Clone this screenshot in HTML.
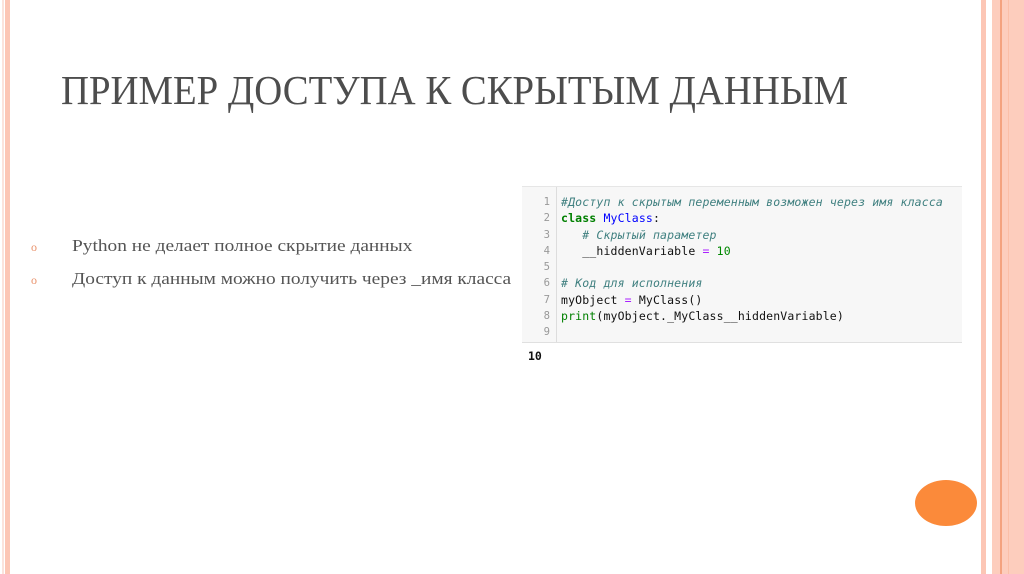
<!DOCTYPE html>
<html><head><meta charset="utf-8"><style>
body{margin:0;width:1024px;height:574px;background:#fff;position:relative;overflow:hidden;font-family:"Liberation Serif",serif}
.s{position:absolute;top:0;height:574px}
.code{position:absolute;left:522px;top:186px;width:440px;height:155px;background:#f7f7f7;border-top:1px solid #e6e6e6;border-bottom:1px solid #e0e0e0}
.gut{position:absolute;left:0;top:0;width:34px;height:155px;border-right:1px solid #ddd}
pre{margin:0;font-family:"DejaVu Sans Mono","Liberation Mono",monospace;font-size:11.5px;line-height:16.3px}
.ln{position:absolute;left:0;top:7px;width:28px;text-align:right;color:#999;font-size:10.6px}
.src{position:absolute;left:39px;top:7px;color:#111;letter-spacing:0.15px}
.c{color:#408080;font-style:italic}.k{color:#008000;font-weight:bold}.n{color:#0000ff}.o{color:#aa22ff}.g{color:#008000}.m{color:#080}
.b{white-space:nowrap}
.b span.t{display:inline-block;transform:scaleX(1.14);transform-origin:left center}
</style></head><body>
<div class="s" style="left:2px;width:2px;background:#fbe3dc"></div>
<div class="s" style="left:5px;width:5px;background:#fcc6b5"></div>
<div class="s" style="left:981px;width:5px;background:#fcc6b5"></div>
<div class="s" style="left:992px;width:32px;background:#fdcdbd"></div>
<div class="s" style="left:1000px;width:2px;background:#f4a27f"></div>
<div class="s" style="left:1008px;width:1px;background:#fbbfa8"></div>
<div style="position:absolute;left:61px;top:66px;font-size:41px;color:#4d4d4d;white-space:nowrap;transform:scaleX(0.945);transform-origin:left top">ПРИМЕР ДОСТУПА К СКРЫТЫМ ДАННЫМ</div>
<div style="position:absolute;left:31px;top:230px;font-size:17px;color:#555;line-height:31px">
<div class="b"><span style="color:#e9916a;font-size:12px;display:inline-block;width:41px">o</span><span class="t">Python не делает полное скрытие данных</span></div>
<div class="b"><span style="color:#e9916a;font-size:12px;display:inline-block;width:41px">o</span><span class="t">Доступ к данным можно получить через _имя класса</span></div>
</div>
<div class="code"><div class="gut"></div>
<pre class="ln">1
2
3
4
5
6
7
8
9</pre>
<pre class="src"><span class="c">#Доступ к скрытым переменным возможен через имя класса</span>
<span class="k">class</span> <span class="n">MyClass</span>:
   <span class="c"># Скрытый параметер</span>
   __hiddenVariable <span class="o">=</span> <span class="m">10</span>

<span class="c"># Код для исполнения</span>
myObject <span class="o">=</span> MyClass()
<span class="g">print</span>(myObject._MyClass__hiddenVariable)
</pre></div>
<pre style="position:absolute;left:528px;top:348px;font-weight:bold;color:#111">10</pre>
<div style="position:absolute;left:915px;top:480px;width:62px;height:46px;border-radius:50%;background:#fb8a3a"></div>
</body></html>
